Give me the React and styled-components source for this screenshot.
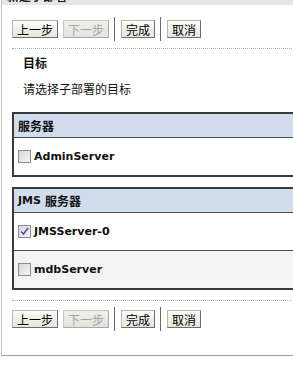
import React from "react";
import styled, { createGlobalStyle } from "styled-components";

const Global = createGlobalStyle`
  html, body { margin: 0; padding: 0; background: #fff; overflow: hidden; }
  body { font-family: "Noto Sans CJK SC", "DejaVu Sans", sans-serif; font-size: 12px; color: #000; }
`;

const Panel = styled.div`
  margin-left: 1px;
  width: 330px;
  border-left: 1px solid #c4c4c4;
  border-bottom: 1px solid #9a9a9a;
  box-shadow: 0 2px 1px -1px #b8b8b8, 0 3px 1px -1px #dcdcdc;
  background: #fff;
`;

const TitleBar = styled.div`
  height: 5px;
  overflow: hidden;
  background: #e6e6e4;
  display: flex;
  align-items: flex-end;
  padding-left: 5px;
`;

const TitleText = styled.span`
  font-weight: bold;
  font-size: 12px;
  line-height: 14px;
  margin-bottom: 2px;
  color: #222;
`;

const Body = styled.div`
  padding: 12px 0 24px 10px;
`;

const ButtonBar = styled.div`
  display: flex;
  align-items: center;
  height: 24px;
  gap: 5px;
  margin-top: ${(p) => p.$mt || 0}px;
`;

const Btn = styled.button`
  font-family: "Noto Sans CJK SC", sans-serif;
  font-size: 12px;
  line-height: 15px;
  height: 18px;
  padding: 0 4px;
  margin: 0;
  border: 1px solid;
  border-color: #b8b8b0 #6e6e6e #6e6e6e #b8b8b0;
  background: linear-gradient(#fbfbf9, #e6e6de);
  color: ${(p) => (p.disabled ? "#a4a4a4" : "#000")};
  ${(p) =>
    p.disabled &&
    `
    border-color: #c8c8c0 #a8a8a8 #a8a8a8 #c8c8c0;
    background: linear-gradient(#f0f0ea, #e4e4de);
  `}
  cursor: default;
`;

const Sep = styled.span`
  width: 2px;
  height: 24px;
  background: #6a6a6a;
  border-right: 1px solid #fff;
  box-sizing: border-box;
`;

const Dotted = styled.div`
  margin-top: ${(p) => p.$mt}px;
  border-top: 1px dotted #b0b0b0;
`;

const SectionTitle = styled.div`
  font-weight: bold;
  line-height: 16px;
  margin: 6px 0 0 11px;
  color: #111;
`;

const Intro = styled.div`
  line-height: 16px;
  margin: 10px 0 0 11px;
  color: #111;
`;

const Table = styled.div`
  margin-top: ${(p) => p.$mt}px;
  border: 2px solid #3a3a3a;
  border-right: none;
`;

const HeadRow = styled.div`
  height: 23px;
  background: #d1dcec;
  border-bottom: 1px solid #4a4a4a;
  display: flex;
  align-items: center;
  padding-left: 4px;
  font-weight: bold;
  font-family: "DejaVu Sans", "Noto Sans CJK SC", sans-serif;
  font-size: 11px;
  color: #111;
`;

const HeadCJK = styled.span`
  font-family: "Noto Sans CJK SC", sans-serif;
  font-size: 12px;
  margin-left: ${(p) => (p.$ml ? 4 : 0)}px;
`;

const Row = styled.div`
  height: 37px;
  display: flex;
  align-items: center;
  gap: 3px;
  padding-left: 4px;
  background: ${(p) => (p.$alt ? "#f3f3f3" : "#fff")};
  border-top: ${(p) => (p.$divider ? "1px solid #4a4a4a" : "none")};
`;

const Box = styled.span`
  width: 11px;
  height: 11px;
  border: 1px solid #8c8c8c;
  background: linear-gradient(135deg, #d6d6d6, #f6f6f6);
  display: inline-flex;
  align-items: center;
  justify-content: center;
`;

const Label = styled.span`
  font-family: "DejaVu Sans", sans-serif;
  font-weight: bold;
  font-size: 11px;
  color: #111;
`;

const Check = ({ checked }) => (
  <Box>
    {checked && (
      <svg width="9" height="9" viewBox="0 0 9 9">
        <path d="M1 4.5 L3.5 7 L8 1" fill="none" stroke="#4659b4" strokeWidth="1.6" />
      </svg>
    )}
  </Box>
);

const Buttons = ({ mt }) => (
  <ButtonBar $mt={mt}>
    <Btn>上一步</Btn>
    <Btn disabled>下一步</Btn>
    <Sep />
    <Btn>完成</Btn>
    <Sep />
    <Btn>取消</Btn>
  </ButtonBar>
);

export default function App() {
  return (
    <Panel>
      <Global />
      <TitleBar>
        <TitleText>新建子部署</TitleText>
      </TitleBar>
      <Body>
        <Buttons />
        <Dotted $mt={7} />
        <SectionTitle>目标</SectionTitle>
        <Intro>请选择子部署的目标</Intro>
        <Table $mt={15}>
          <HeadRow>
            <HeadCJK>服务器</HeadCJK>
          </HeadRow>
          <Row>
            <Check />
            <Label>AdminServer</Label>
          </Row>
        </Table>
        <Table $mt={10}>
          <HeadRow>
            JMS<HeadCJK $ml>服务器</HeadCJK>
          </HeadRow>
          <Row>
            <Check checked />
            <Label>JMSServer-0</Label>
          </Row>
          <Row $alt $divider>
            <Check />
            <Label>mdbServer</Label>
          </Row>
        </Table>
        <Dotted $mt={10} />
        <Buttons mt={6} />
      </Body>
    </Panel>
  );
}
